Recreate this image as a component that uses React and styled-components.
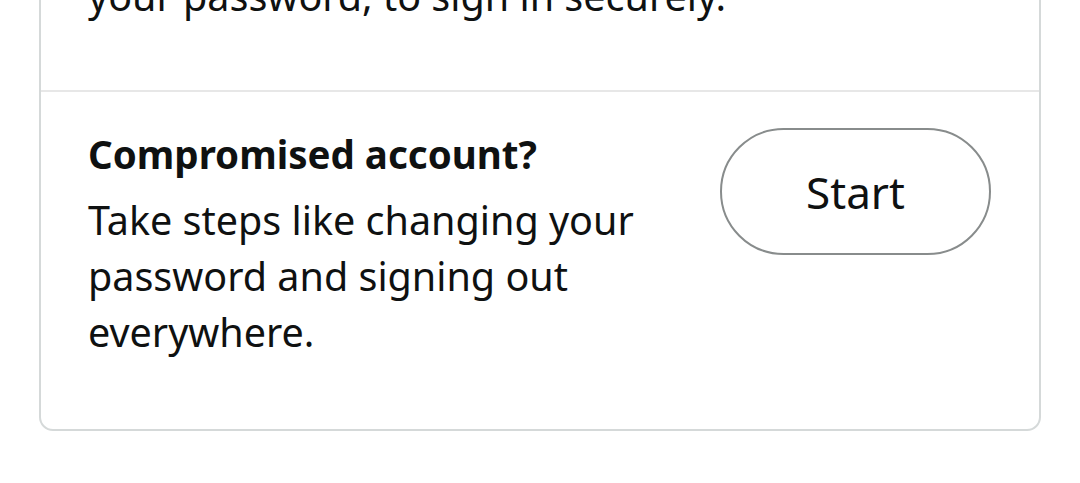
import React from 'react';
import styled, { createGlobalStyle } from 'styled-components';

const GlobalStyle = createGlobalStyle`
  html, body {
    margin: 0;
    padding: 0;
    background: #ffffff;
  }
  body {
    font-family: "Noto Sans", "Open Sans", Arial, sans-serif;
    color: #0f1111;
  }
`;

const Screen = styled.div`
  height: 483px;
  overflow: hidden;
  display: flex;
  flex-direction: column;
  justify-content: flex-end;
  padding: 0 39px 52px 39px;
  box-sizing: border-box;
`;

const Card = styled.div`
  border: 2px solid #d5d9d9;
  border-radius: 14px;
  background: #fff;
`;

const Section = styled.div`
  display: flex;
  align-items: flex-start;
  padding: ${p => p.pad || '34px 48px 69px 47px'};
  & + & {
    border-top: 2px solid #e7e7e7;
  }
`;

const TextCol = styled.div`
  flex: 1;
  min-width: 0;
`;

const Title = styled.div`
  font-size: 38.5px;
  font-weight: 700;
  line-height: 56px;
  margin-bottom: 10px;
`;

const Body = styled.div`
  font-size: 39.5px;
  line-height: 56px;
`;

const PillButton = styled.button`
  flex: none;
  width: 271px;
  height: 127px;
  margin: 2px 0 0 40px;
  border: 2px solid #888c8c;
  border-radius: 64px;
  background: #fff;
  font-family: inherit;
  font-size: 44px;
  color: #0f1111;
  padding: 0;
`;

export default function App() {
  return (
    <>
      <GlobalStyle />
      <Screen>
        <Card>
          <Section pad="0 48px 66px 47px">
            <TextCol>
              <Body>
                Use the face ID, fingerprint, or PIN you use to unlock your phone instead of
                <br />
                your password, to sign in securely.
              </Body>
            </TextCol>
          </Section>
          <Section>
            <TextCol>
              <Title>Compromised account?</Title>
              <Body>Take steps like changing your password and signing out everywhere.</Body>
            </TextCol>
            <PillButton>Start</PillButton>
          </Section>
        </Card>
      </Screen>
    </>
  );
}
